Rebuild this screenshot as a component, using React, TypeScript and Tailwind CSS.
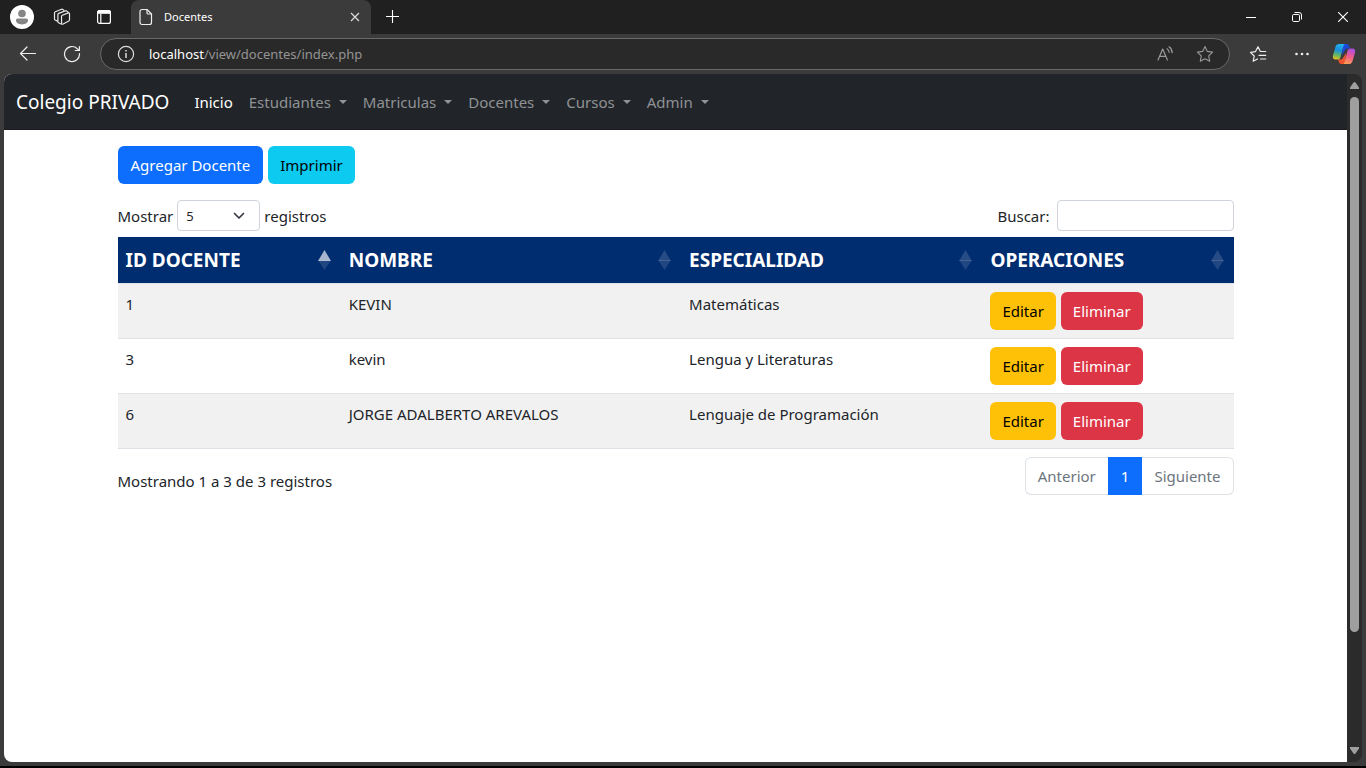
import { useId, useState } from "react";
import type { ReactNode } from "react";

const menus = ["Estudiantes", "Matriculas", "Docentes", "Cursos", "Admin"];

const columns = [
  { label: "ID DOCENTE", width: "w-[20%]", sorted: true },
  { label: "NOMBRE", width: "w-[30.5%]", sorted: false },
  { label: "ESPECIALIDAD", width: "w-[27%]", sorted: false },
  { label: "OPERACIONES", width: "w-[22.5%]", sorted: false },
];

const teachers = [
  { id: 1, name: "KEVIN", subject: "Matemáticas" },
  { id: 3, name: "kevin", subject: "Lengua y Literaturas" },
  { id: 6, name: "JORGE ADALBERTO AREVALOS", subject: "Lenguaje de Programación" },
];

function Icon({ children, label, className }: { children: ReactNode; label: string; className: string }) {
  return (
    <button type="button" aria-label={label} className={`flex shrink-0 items-center justify-center ${className}`}>
      {children}
    </button>
  );
}

function CopilotLogo() {
  const id = useId();
  return (
    <svg width="24" height="22" viewBox="0 0 24 22" fill="none">
      <defs>
        <linearGradient id={`${id}a`} x1="9" y1="1" x2="5" y2="17" gradientUnits="userSpaceOnUse">
          <stop stopColor="#22b8ee" />
          <stop offset=".4" stopColor="#1a8fe0" />
          <stop offset=".7" stopColor="#5fb56a" />
          <stop offset="1" stopColor="#f2c21a" />
        </linearGradient>
        <linearGradient id={`${id}b`} x1="19" y1="5" x2="14" y2="21" gradientUnits="userSpaceOnUse">
          <stop stopColor="#a54ee8" />
          <stop offset=".5" stopColor="#ef5a8e" />
          <stop offset="1" stopColor="#ffa04f" />
        </linearGradient>
      </defs>
      <path d="M11 1h3.800c1.300 0 1.900.7 2.300 2l.8 2.600h-2.300c-1.600 0-2.600.9-3.100 2.500L10 12z" fill="#1a48d8" />
      <path d="M13 21H9.200c-1.300 0-1.900-.7-2.300-2l-.8-2.600h2.300c1.600 0 2.600-.9 3.100-2.500L14 10z" fill="#f0542e" />
      <path d="M7.200 1h6.200c-1 0-1.600.8-2 2.100L8.600 14c-.5 1.600-1.400 2.600-3 2.600H3.600c-2.400 0-3.300-1.800-2.600-4.300l2.500-8.500C4.100 1.900 5.200 1 7.200 1z" fill={`url(#${id}a)`} />
      <path d="M16.800 21h-6.200c1 0 1.600-.8 2-2.100L15.400 8c.5-1.600 1.400-2.600 3-2.600h2c2.400 0 3.300 1.800 2.600 4.300l-2.500 8.500c-.6 1.900-1.700 2.800-3.700 2.800z" fill={`url(#${id}b)`} />
    </svg>
  );
}

function TitleBar() {
  return (
    <header className="flex h-[34px] items-stretch bg-[#202020] text-white">
      <div className="flex items-center pl-2">
        <Icon label="Perfil" className="w-7">
          <svg width="24" height="24" viewBox="0 0 24 24">
            <circle cx="12" cy="12" r="12" fill="#fff" />
            <circle cx="12" cy="8.500" r="3.800" fill="#858585" />
            <path d="M6 15.500c0-1.200.7-1.900 1.900-1.900h8.200c1.200 0 1.900.7 1.900 1.900 0 2.300-2.500 3.900-6 3.900s-6-1.600-6-3.900z" fill="#858585" />
          </svg>
        </Icon>
        <Icon label="Áreas de trabajo" className="ml-3 w-7">
          <svg width="18" height="18" viewBox="0 0 18 18" fill="none" stroke="#e8e8e8" strokeWidth="1.200" strokeLinejoin="round" strokeLinecap="round">
            <path d="M8.500 8.300q0-.8.800-1.100l6-2.300q1.200-.4 1.200.8v6.100q0 .8-.7 1.200l-5.600 3q-1.500.7-1.600-.7z" />
            <path d="M8 16 5.600 14.800q-.7-.4-.7-1.100V6.500q0-.8.8-1.100l6.500-2.500q.7-.2 1.200 0l1.800 1.400" />
            <path d="M4.500 13.100 2.100 12q-.6-.4-.6-1.100V4.800q0-.8.8-1.100l6.300-2.400q.7-.2 1.200.1l1.100.8" />
          </svg>
        </Icon>
        <Icon label="Menú de pestañas" className="ml-4 w-6">
          <svg width="16" height="16" viewBox="0 0 16 16" fill="none" stroke="#fff" strokeWidth="1.200">
            <rect x="1.600" y="1.600" width="12.800" height="12.800" rx="2" />
            <path d="M1.600 4.200v-.6a2 2 0 0 1 2-2h8.800a2 2 0 0 1 2 2v.6z" fill="#fff" />
            <path d="M4.800 5v9" />
          </svg>
        </Icon>
      </div>
      <div className="ml-[15px] flex w-60 items-center rounded-t-lg bg-[#3b3b3b] pl-2 pr-2">
        <svg width="14" height="18" viewBox="0 0 14 18" fill="none" stroke="#eee" strokeWidth="1.200" strokeLinejoin="round">
          <path d="M3 1.500h5L12.500 6v8.500a2 2 0 0 1-2 2H3a2 2 0 0 1-2-2v-11a2 2 0 0 1 2-2z" />
          <path d="M8 1.500V5a1 1 0 0 0 1 1h3.500" />
        </svg>
        <span className="ml-[11px] flex-1 text-[11px] leading-4">Docentes</span>
        <Icon label="Cerrar pestaña" className="size-4">
          <svg width="10" height="10" viewBox="0 0 10 10" stroke="#ddd" strokeWidth="1.200">
            <path d="m1 1 8 8M9 1 1 9" />
          </svg>
        </Icon>
      </div>
      <Icon label="Nueva pestaña" className="ml-3 w-5">
        <svg width="14" height="14" viewBox="0 0 14 14" stroke="#fff" strokeWidth="1.100">
          <path d="M6.500 0v13M0 6.500h13" />
        </svg>
      </Icon>
      <div className="ml-auto flex">
        <Icon label="Minimizar" className="w-[46px]">
          <svg width="10" height="10" viewBox="0 0 10 10" stroke="#fff">
            <path d="M0 5.500h10" />
          </svg>
        </Icon>
        <Icon label="Restaurar" className="w-[46px]">
          <svg width="10" height="10" viewBox="0 0 10 10" fill="none" stroke="#fff">
            <rect x=".5" y="2.500" width="7" height="7" rx="1.200" />
            <path d="M2.500.5H7a2.500 2.500 0 0 1 2.500 2.500v4.500" />
          </svg>
        </Icon>
        <Icon label="Cerrar" className="w-[46px]">
          <svg width="10" height="10" viewBox="0 0 10 10" stroke="#fff" strokeWidth="1.100">
            <path d="m0 0 10 10M10 0 0 10" />
          </svg>
        </Icon>
      </div>
    </header>
  );
}

function AddressBar() {
  return (
    <div className="flex h-10 items-center pl-4 pr-[10px]">
      <Icon label="Atrás" className="size-6">
        <svg width="18" height="16" viewBox="0 0 18 16" fill="none" stroke="#eee" strokeWidth="1.200" strokeLinecap="round" strokeLinejoin="round">
          <path d="M16.500 7.500H1.500M8 1 1.500 7.500 8 14" />
        </svg>
      </Icon>
      <Icon label="Actualizar" className="ml-5 size-6">
        <svg width="18" height="18" viewBox="0 0 18 18" fill="none" stroke="#eee" strokeWidth="1.200" strokeLinecap="round" strokeLinejoin="round">
          <path d="M16.500 8.500A7.500 7.500 0 1 1 14.300 3.700L16 5.300" />
          <path d="M16.400 1.500v4h-4.200" />
        </svg>
      </Icon>
      <div className="ml-4 flex h-8 flex-1 items-center rounded-full border border-[#6a6a6a] bg-[#292929] pl-4 pr-3">
        <Icon label="Información del sitio" className="size-[18px]">
          <svg width="18" height="18" viewBox="0 0 18 18" fill="none" stroke="#ddd" strokeWidth="1.200">
            <circle cx="9" cy="9" r="7.600" />
            <path d="M9 8v5M9 5.100v1.500" strokeWidth="1.500" />
          </svg>
        </Icon>
        <span className="ml-[14px] flex-1 text-[13px] leading-5 text-[#949494]">
          <span className="text-white">localhost</span>/view/docentes/index.php
        </span>
        <Icon label="Leer en voz alta" className="size-6">
          <svg width="18" height="16" viewBox="0 0 18 16" fill="none" stroke="#999" strokeWidth="1.200" strokeLinecap="round" strokeLinejoin="round">
            <path d="M2 14 6.700 3l4.700 11M3.700 10.300h6" />
            <path d="M11 2.800c1.200.8 1.900 1.900 2.100 3.500M13 .8c2 1.200 3 3.100 3.200 5.800" />
          </svg>
        </Icon>
        <Icon label="Agregar a favoritos" className="ml-4 size-6">
          <svg width="18" height="18" viewBox="0 0 18 18" fill="none" stroke="#999" strokeWidth="1.100" strokeLinejoin="round">
            <path d="m9 1.500 2.300 4.900 5.300.7-3.900 3.700 1 5.400L9 13.700l-4.700 2.500 1-5.400-3.900-3.700 5.300-.7z" />
          </svg>
        </Icon>
      </div>
      <Icon label="Favoritos" className="ml-4 size-6">
        <svg width="18" height="18" viewBox="0 0 18 18" fill="none" stroke="#eee" strokeWidth="1.200" strokeLinecap="round" strokeLinejoin="round">
          <path d="M8.500 14 4.200 16.200l1-5.200L1.500 7.300l5-.7L9 1.700l2.400 4.800h5.300" />
          <path d="M10 10.300h6.700M11.500 14h5.200" />
        </svg>
      </Icon>
      <Icon label="Configuración y más" className="ml-5 size-6">
        <svg width="14" height="4" viewBox="0 0 14 4" fill="#eee">
          <circle cx="1.500" cy="2" r="1.300" />
          <circle cx="7" cy="2" r="1.300" />
          <circle cx="12.500" cy="2" r="1.300" />
        </svg>
      </Icon>
      <Icon label="Copilot" className="ml-[18px] size-6">
        <CopilotLogo />
      </Icon>
    </div>
  );
}

function NavBar() {
  return (
    <nav className="flex h-14 items-center border-b border-[#1b1a20] bg-[#212529] px-3 pt-px text-[15px] leading-6 text-[#909294]">
      <a href="#" className="mr-[17px] text-[19px] leading-[30px] text-white">Colegio PRIVADO</a>
      <a href="#" className="px-2 text-white">Inicio</a>
      {menus.map((menu) => (
        <button key={menu} type="button" className="flex items-center px-2">
          {menu}
          <svg width="8" height="4" viewBox="0 0 8 4" fill="currentColor" className="ml-2">
            <path d="M0 0h8L4 4z" />
          </svg>
        </button>
      ))}
    </nav>
  );
}

function SortArrows({ active }: { active: boolean }) {
  return (
    <svg width="13" height="20" viewBox="0 0 13 20" fill="#fff" className="shrink-0">
      <path d="M0 11 6.500 0 13 11z" opacity={active ? 0.65 : 0.15} />
      <path d="M0 10h13L6.500 20z" opacity=".13" />
    </svg>
  );
}

function TeacherTable() {
  return (
    <table className="mt-[6px] w-full table-fixed border-collapse">
      <thead>
        <tr className="h-[46px] border-b border-[#dee2e6] bg-[#002c70] text-left text-white">
          {columns.map((column) => (
            <th key={column.label} scope="col" className={`${column.width} px-2 pb-0 pt-px font-bold`}>
              <button type="button" className="flex w-full items-center justify-between pr-[2px] text-[19px] leading-7">
                {column.label}
                <SortArrows active={column.sorted} />
              </button>
            </th>
          ))}
        </tr>
      </thead>
      <tbody>
        {teachers.map((teacher) => (
          <tr key={teacher.id} className="border-b border-[#dee2e6] align-top odd:bg-[#f1f1f1]">
            <td className="p-2">{teacher.id}</td>
            <td className="p-2">{teacher.name}</td>
            <td className="p-2">{teacher.subject}</td>
            <td className="p-2">
              <div className="flex gap-[5px]">
                <button type="button" className="h-[38px] rounded-md bg-[#ffc107] px-3 text-black">Editar</button>
                <button type="button" className="h-[38px] rounded-md bg-[#dc3545] px-3 text-white">Eliminar</button>
              </div>
            </td>
          </tr>
        ))}
      </tbody>
    </table>
  );
}

function ScrollBar() {
  return (
    <div aria-hidden="true" className="flex w-[15px] shrink-0 flex-col items-center rounded-r-lg bg-[#2b2b2b] py-2">
      <svg width="9" height="7" viewBox="0 0 9 7" fill="#9f9f9f">
        <path d="M0 7V5.500L3.500.6q1-1.200 2 0L9 5.500V7z" />
      </svg>
      <div className="mt-2 w-[9px] flex-[535] rounded-full bg-[#9f9f9f]" />
      <div className="flex-[115]" />
      <svg width="9" height="7" viewBox="0 0 9 7" fill="#9f9f9f">
        <path d="M0 0v1.500l3.500 4.900q1 1.200 2 0L9 1.500V0z" />
      </svg>
    </div>
  );
}

export default function App() {
  const [query, setQuery] = useState("");
  const [size, setSize] = useState("5");

  return (
    <div className="flex min-h-screen flex-col border-b-2 border-black bg-[#3b3b3b] font-['Noto_Sans',sans-serif]">
      <TitleBar />
      <AddressBar />
      <div className="mx-1 mb-1 flex flex-1">
        <div className="min-w-0 flex-1 overflow-hidden rounded-l-lg bg-white">
          <NavBar />
          <main className="mx-auto max-w-[1140px] px-3 pt-4 text-[15px] leading-6 text-[#212529]">
            <div className="flex gap-[5px]">
              <button type="button" className="h-[38px] rounded-md bg-[#0d6efd] px-[13px] text-white">Agregar Docente</button>
              <button type="button" className="h-[38px] rounded-md bg-[#0dcaf0] px-3 text-black">Imprimir</button>
            </div>
            <div className="mt-4 flex items-center justify-between">
              <label className="flex items-center gap-1">
                Mostrar
                <span className="grid items-center">
                  <select
                    value={size}
                    onChange={(event) => setSize(event.target.value)}
                    className="col-start-1 row-start-1 h-[31px] w-[83px] appearance-none rounded border border-[#ced4da] bg-white pl-2 text-[13px] leading-5"
                  >
                    <option>5</option>
                    <option>10</option>
                    <option>25</option>
                  </select>
                  <svg width="12" height="8" viewBox="0 0 12 8" fill="none" stroke="#343a40" strokeWidth="1.700" strokeLinecap="round" strokeLinejoin="round" className="pointer-events-none col-start-1 row-start-1 mr-[15px] justify-self-end">
                    <path d="m1.500 1.500 4.500 4.500 4.500-4.500" />
                  </svg>
                </span>
                registros
              </label>
              <label className="flex items-center gap-[7px]">
                Buscar:
                <input
                  type="search"
                  value={query}
                  onChange={(event) => setQuery(event.target.value)}
                  className="h-[31px] w-[177px] rounded border border-[#ced4da] bg-white px-2 text-[13px]"
                />
              </label>
            </div>
            <TeacherTable />
            <div className="mt-2 flex items-end justify-between">
              <p className="pb-[2px]">Mostrando 1 a 3 de 3 registros</p>
              <nav aria-label="Paginación" className="flex h-[38px] text-[#6c757d]">
                <button type="button" className="rounded-l-md border border-r-0 border-[#dee2e6] px-3">Anterior</button>
                <button type="button" aria-current="page" className="bg-[#0d6efd] px-[13px] text-white">1</button>
                <button type="button" className="rounded-r-md border border-l-0 border-[#dee2e6] px-3">Siguiente</button>
              </nav>
            </div>
          </main>
        </div>
        <ScrollBar />
      </div>
    </div>
  );
}
